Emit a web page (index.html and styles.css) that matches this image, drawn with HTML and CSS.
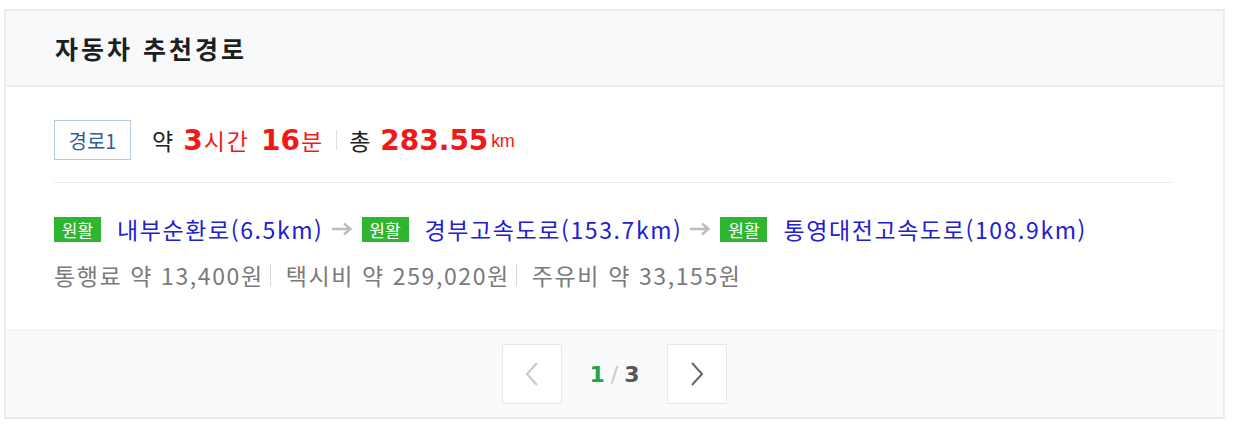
FILE: index.html
```html
<!DOCTYPE html>
<html lang="ko">
<head>
<meta charset="utf-8">
<title>자동차 추천경로</title>
<link rel="stylesheet" href="styles.css">
</head>
<body>
<div class="card">
  <div class="card-head"><h2 class="title">자동차 추천경로</h2></div>
  <div class="card-body">
    <div class="summary">
      <span class="route-tag">경로1</span>
      <span class="txt">약</span>
      <b class="num">3</b><span class="red">시간</span>
      <b class="num gap">16</b><span class="red">분</span>
      <span class="bar"></span>
      <span class="txt">총</span>
      <b class="num">283.55</b><span class="red unit">km</span>
    </div>
    <div class="sep"></div>
    <div class="roads">
      <span class="flow">원활</span><span class="road">내부순환로(6.5km)</span>
      <svg class="arrow" width="22" height="14" viewBox="0 0 22 14"><path d="M1 7 H19 M13 1.5 L19.5 7 L13 12.5" fill="none" stroke="#bdbdbd" stroke-width="2.4"/></svg>
      <span class="flow">원활</span><span class="road">경부고속도로(153.7km)</span>
      <svg class="arrow" width="22" height="14" viewBox="0 0 22 14"><path d="M1 7 H19 M13 1.5 L19.5 7 L13 12.5" fill="none" stroke="#bdbdbd" stroke-width="2.4"/></svg>
      <span class="flow">원활</span><span class="road">통영대전고속도로(108.9km)</span>
    </div>
    <div class="costs">
      <span>통행료 약 13,400원</span><span class="bar light"></span>
      <span>택시비 약 259,020원</span><span class="bar light"></span>
      <span>주유비 약 33,155원</span>
    </div>
  </div>
  <div class="card-foot">
    <button class="pg-btn" type="button" aria-label="이전">
      <svg width="16" height="26" viewBox="0 0 16 26"><path d="M13 2 L3 13 L13 24" fill="none" stroke="#c8c8c8" stroke-width="2"/></svg>
    </button>
    <span class="pg-num"><b class="cur">1</b><span class="slash">/</span><b class="tot">3</b></span>
    <button class="pg-btn" type="button" aria-label="다음">
      <svg width="16" height="26" viewBox="0 0 16 26"><path d="M3 2 L13 13 L3 24" fill="none" stroke="#666" stroke-width="2"/></svg>
    </button>
  </div>
</div>
</body>
</html>
```

FILE: styles.css
```css
* { box-sizing: border-box; }
body {
  margin: 0;
  background: #fff;
  font-family: "Noto Sans CJK KR", "Noto Sans", sans-serif;
  color: #222;
}
.card {
  margin: 9px 0 0 4px;
  width: 1221px;
  border: 2px solid #ececec;
}
.card-head {
  height: 76px;
  background: #f8f9fb;
  border-bottom: 2px solid #ececec;
  display: flex;
  align-items: center;
  padding-left: 49px;
}
.title {
  margin: 0;
  font-size: 25px;
  font-weight: 700;
  color: #1e1e1e;
  letter-spacing: 3px;
}
.card-body {
  height: 243px;
  padding: 33px 50px 0 48px;
}
.summary {
  height: 40px;
  display: flex;
  align-items: center;
  font-size: 23px;
  white-space: pre;
}
.route-tag {
  width: 77px;
  height: 40px;
  border: 1px solid #b7cadd;
  color: #2f5f98;
  font-size: 20px;
  display: flex;
  align-items: center;
  justify-content: center;
  margin-right: 21px;
}
.txt { color: #222; margin-right: 10px; }
.red { color: #f31818; letter-spacing: 2px; }
.num {
  font-family: "DejaVu Sans", "Liberation Sans", sans-serif;
  font-weight: 700;
  font-size: 28px;
  color: #f31818;
  margin-right: 1px;
}
.num.gap { margin-left: 11px; }
.unit {
  font-family: "Liberation Sans", sans-serif;
  font-size: 18px;
  letter-spacing: -0.5px;
  align-self: center;
  padding-top: 3px;
  margin-left: 2px;
}
.bar {
  width: 1px;
  height: 20px;
  background: #dcdcdc;
  margin: 0 12px 0 12px;
}
.bar.light { height: 22px; background: #d6d6d6; margin: 0 15px 0 6px; }
.sep {
  margin-top: 22px;
  height: 1px;
  background: #ebebeb;
}
.roads {
  margin-top: 31px;
  height: 30px;
  display: flex;
  align-items: center;
  font-size: 23px;
  white-space: pre;
}
.flow {
  background: #2fb530;
  color: #fff;
  font-size: 17px;
  width: 47px;
  height: 25px;
  display: flex;
  align-items: center;
  justify-content: center;
  margin-right: 16px;
  letter-spacing: 0;
}
.road { color: #2020d0; letter-spacing: 1.6px; }
.arrow { margin: 0 9px 0 7px; }
.costs {
  margin-top: 16px;
  height: 30px;
  display: flex;
  align-items: center;
  font-size: 23px;
  letter-spacing: 1.6px;
  color: #7a7a7a;
  white-space: pre;
}
.card-foot {
  height: 87px;
  background: #f9fafc;
  border-top: 1px solid #eef0f4;
  display: flex;
  align-items: center;
  justify-content: center;
}
.pg-btn {
  width: 60px;
  height: 60px;
  background: #fff;
  border: 1px solid #e8e8e8;
  padding: 0;
  display: flex;
  align-items: center;
  justify-content: center;
}
.pg-num {
  width: 105px;
  display: flex;
  justify-content: center;
  align-items: center;
  font-size: 22px;
  font-family: "DejaVu Sans", "Liberation Sans", sans-serif;
}
.cur { color: #22a34a; }
.slash { color: #c8c8c8; margin: 0 6px; font-weight: 400; }
.tot { color: #555; }
```
